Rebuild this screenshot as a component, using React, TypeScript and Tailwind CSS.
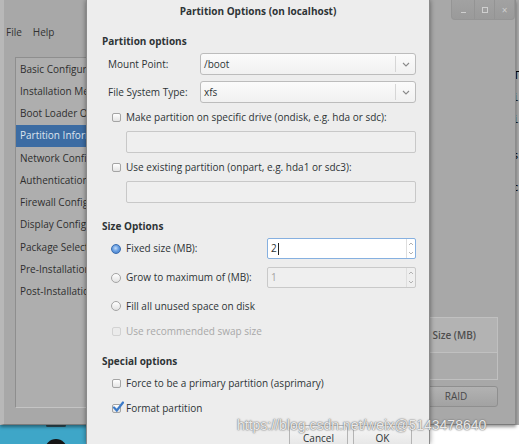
import React from "react";

const LIST_ITEMS = [
  "Basic Configuration",
  "Installation Method",
  "Boot Loader Options",
  "Partition Information",
  "Network Configuration",
  "Authentication",
  "Firewall Configuration",
  "Display Configuration",
  "Package Selection",
  "Pre-Installation Script",
  "Post-Installation Script",
];

function Check({ checked, disabled }: { checked?: boolean; disabled?: boolean }) {
  return (
    <span
      className={`relative inline-block h-[9px] w-[9px] shrink-0 rounded-[2px] border ${
        disabled
          ? "border-[#d2d2d2] bg-[#ebebeb]"
          : "border-[#a4a4a4] bg-linear-to-b from-white to-[#e4e4e4]"
      }`}
    >
      {checked && (
        <svg className="absolute -left-[1px] -top-[4px] h-[12px] w-[12px]" viewBox="0 0 12 12">
          <path d="M2 6.5 L4.8 9.5 L11 1.5" stroke="#3d7bc8" strokeWidth="2.2" fill="none" strokeLinecap="round" />
        </svg>
      )}
    </span>
  );
}

function Radio({ checked }: { checked?: boolean }) {
  if (checked)
    return (
      <span className="inline-block h-[10px] w-[10px] shrink-0 rounded-full border border-[#3a6cae] bg-[radial-gradient(circle_at_45%_40%,#c4dcf7_0%,#6aa0e2_45%,#3a76c6_100%)]" />
    );
  return (
    <span className="inline-block h-[10px] w-[10px] shrink-0 rounded-full border border-[#a4a4a4] bg-linear-to-b from-white to-[#e2e2e2]" />
  );
}

function Chevron() {
  return (
    <svg className="h-[5px] w-[8px]" viewBox="0 0 8 5">
      <path d="M1 1 L4 4 L7 1" stroke="#8a8a8a" strokeWidth="1.1" fill="none" />
    </svg>
  );
}

function Combo({ value }: { value: string }) {
  return (
    <div className="flex h-[22px] w-[216px] items-center rounded-[3px] border border-[#bcbcbc] bg-linear-to-b from-[#fbfbfb] to-[#f1f1f1]">
      <span className="flex-1 pl-[3px]">{value}</span>
      <span className="h-[16px] border-l border-[#d6d6d6]" />
      <span className="flex w-[19px] justify-center">
        <Chevron />
      </span>
    </div>
  );
}

function Spin({ value, focused }: { value: string; focused?: boolean }) {
  return (
    <div
      className={`flex h-[21px] w-[149px] items-center rounded-[2px] border ${
        focused ? "border-[#86b0e0] bg-white" : "border-[#c9c9c9] bg-[#efefef] text-[#a3a3a3]"
      }`}
    >
      <span className="flex flex-1 items-center pl-[3px]">
        {value}
        {focused && <span className="ml-[1px] h-[12px] w-[1px] bg-[#222]" />}
      </span>
      <span className="flex h-full w-[9px] flex-col items-center justify-between border-l border-[#dedede] py-[3px]">
        <svg className="h-[4px] w-[6px]" viewBox="0 0 6 4">
          <path d="M1 3 L3 1 L5 3" stroke="#aaa" strokeWidth="0.9" fill="none" />
        </svg>
        <svg className="h-[4px] w-[6px]" viewBox="0 0 6 4">
          <path d="M1 1 L3 3 L5 1" stroke="#aaa" strokeWidth="0.9" fill="none" />
        </svg>
      </span>
    </div>
  );
}

export default function App() {
  return (
    <div className="relative h-[444px] w-[519px] overflow-hidden bg-[#a9a9a9] font-['Open_Sans',sans-serif] text-[10px] text-[#2e3436]">
      {/* window behind, right edge */}
      <div className="absolute left-[516px] top-[70px] flex w-[3px] flex-col gap-[10px] overflow-hidden font-['DejaVu_Sans_Mono',monospace] text-[11px] leading-[12px] text-black">
        <span className="-ml-[3px]">T</span>
        <span className="-ml-[4px]">i</span>
        <span className="-ml-[4px]">i</span>
        <span className="-ml-[4px] mt-[14px]">s</span>
        <span className="-ml-[4px] mt-[10px]">c</span>
      </div>

      {/* desktop below */}
      <div className="absolute left-0 top-[423px] h-[21px] w-[100px] bg-[#3ea6c8]">
        <span className="absolute left-[46px] top-[1px] h-[3px] w-[20px] rounded-sm bg-[#2a2a2a]/70" />
        <span className="absolute left-[45px] top-[16px] h-[22px] w-[22px] rounded-full bg-[#151515]" />
      </div>
      <div className="absolute left-[420px] top-[425px] h-[19px] w-[99px] bg-white" />

      {/* main window */}
      <div className="absolute left-0 top-0 flex h-[425px] w-[516px] flex-col border-b border-l-[4px] border-r border-b-[#7a7a7a] border-l-[#b8b8b8] border-r-[#8c8c8c] bg-[#a8a8a8] shadow-[0_2px_3px_rgba(0,0,0,0.4)]">
        <div className="flex h-[20px] shrink-0 justify-end">
          <div className="flex h-[20px] overflow-hidden rounded-b-[4px] border border-t-0 border-[#959595] bg-linear-to-b from-[#a2a2a2] to-[#9a9a9a] text-[#cfcfcf]">
            <span className="flex w-[22px] items-end justify-center pb-[6px]">
              <span className="h-[1px] w-[5px] bg-[#cfcfcf]" />
            </span>
            <span className="flex w-[20px] items-center justify-center border-l border-[#949494]">
              <span className="h-[6px] w-[6px] border border-[#cfcfcf]" />
            </span>
            <span className="flex w-[20px] items-center justify-center border-l border-[#949494] text-[10px] leading-none">
              ×
            </span>
          </div>
        </div>
        <div className="flex h-[24px] shrink-0 items-center gap-[11px] pl-[2px] text-[#333]">
          <span>File</span>
          <span>Help</span>
        </div>
        <div className="flex shrink-0 pl-[11px] pr-[17px] pt-[13px]">
          <div className="flex h-[351px] w-[200px] shrink-0 flex-col border border-b-[#c4c4c4] border-l-[#8e8e8e] border-r-[#c4c4c4] border-t-[#8e8e8e] bg-[#aeaeae]">
            {LIST_ITEMS.map((item, i) => (
              <div
                key={item}
                className={`flex h-[22.27px] shrink-0 items-center whitespace-nowrap pl-[4px] ${
                  i === 3 ? "bg-[#3c6ca3] text-[#dde4ee]" : "text-[#2e2e2e]"
                }`}
              >
                {item}
              </div>
            ))}
          </div>
          <div className="flex flex-1 flex-col justify-end pb-[1px] pl-[12px]">
            <div className="flex h-[36px] items-center justify-end border border-[#c0c0c0] bg-[#b3b3b3] pr-[21px] font-semibold text-[#4e4e4e]">
              Size (MB)
            </div>
            <div className="h-[27px] border border-t-0 border-[#c0c0c0] bg-[#ababab]" />
            <div className="mt-[6px] flex h-[21px] items-center justify-center rounded-[3px] border border-[#8f8f8f] bg-linear-to-b from-[#b2b2b2] to-[#a2a2a2] pl-[187px] text-[#4a4a4a]">
              RAID
            </div>
          </div>
        </div>
      </div>

      {/* dialog */}
      <div className="absolute left-[86px] top-0 flex h-[444px] w-[344px] flex-col overflow-hidden border-l border-r border-[#8a8a8a] bg-[#ededed] shadow-[0_0_5px_rgba(0,0,0,0.45)]">
        <div className="flex h-[22px] shrink-0 items-center justify-center font-bold text-[#2e3436]">
          Partition Options (on localhost)
        </div>
        <div className="flex shrink-0 flex-col pl-[15px] pr-[13px] [&>*]:shrink-0">
          <div className="mt-[11px] flex h-[16px] items-center font-bold">Partition options</div>

          <div className="mt-[4px] flex h-[22px] items-center">
            <span className="w-[98px] pl-[6px]">Mount Point:</span>
            <Combo value="/boot" />
          </div>
          <div className="mt-[6px] flex h-[22px] items-center">
            <span className="w-[98px] pl-[6px]">File System Type:</span>
            <Combo value="xfs" />
          </div>

          <div className="mt-[6px] flex h-[16px] items-center gap-[5px] pl-[10px]">
            <Check />
            <span>Make partition on specific drive (ondisk, e.g. hda or sdc):</span>
          </div>
          <div className="ml-[24px] mt-[6px] h-[22px] rounded-[2px] border border-[#c8c8c8] bg-[#efefef]" />

          <div className="mt-[6px] flex h-[16px] items-center gap-[5px] pl-[10px]">
            <Check />
            <span>Use existing partition (onpart, e.g. hda1 or sdc3):</span>
          </div>
          <div className="ml-[24px] mt-[6px] h-[22px] rounded-[2px] border border-[#c8c8c8] bg-[#efefef]" />

          <div className="mt-[15px] flex h-[16px] items-center font-bold">Size Options</div>

          <div className="mt-[4px] flex h-[21px] items-center justify-between">
            <span className="flex items-center gap-[5px] pl-[9px]">
              <Radio checked />
              <span>Fixed size (MB):</span>
            </span>
            <Spin value="2" focused />
          </div>
          <div className="mt-[8px] flex h-[21px] items-center justify-between">
            <span className="flex items-center gap-[5px] pl-[9px]">
              <Radio />
              <span>Grow to maximum of (MB):</span>
            </span>
            <Spin value="1" />
          </div>
          <div className="mt-[10px] flex h-[16px] items-center gap-[5px] pl-[9px]">
            <Radio />
            <span>Fill all unused space on disk</span>
          </div>
          <div className="mt-[9px] flex h-[16px] items-center gap-[5px] pl-[10px] text-[#a8a8a8]">
            <Check disabled />
            <span>Use recommended swap size</span>
          </div>

          <div className="mt-[14px] flex h-[16px] items-center font-bold">Special options</div>

          <div className="mt-[6px] flex h-[16px] items-center gap-[5px] pl-[10px]">
            <Check />
            <span>Force to be a primary partition (asprimary)</span>
          </div>
          <div className="mt-[9px] flex h-[16px] items-center gap-[5px] pl-[10px]">
            <Check checked />
            <span>Format partition</span>
          </div>

          <div className="mr-[4px] mt-[9px] flex justify-end gap-[5px]">
            <button className="h-[26px] w-[59px] rounded-[3px] border border-[#b4b4b4] bg-linear-to-b from-[#f6f6f6] to-[#e3e3e3] text-[#2e3436]">
              Cancel
            </button>
            <button className="h-[26px] w-[59px] rounded-[3px] border border-[#b4b4b4] bg-linear-to-b from-[#f6f6f6] to-[#e3e3e3] text-[#2e3436]">
              OK
            </button>
          </div>
        </div>
      </div>

      {/* watermark */}
      <div className="pointer-events-none absolute left-[237px] top-[417px] whitespace-nowrap font-['Liberation_Sans',sans-serif] text-[14px] leading-[16px] text-white/85 [text-shadow:0_0_2px_#777,0_0_1px_#555]">
        https://blog.csdn.net/weix@5143478640
      </div>
    </div>
  );
}
